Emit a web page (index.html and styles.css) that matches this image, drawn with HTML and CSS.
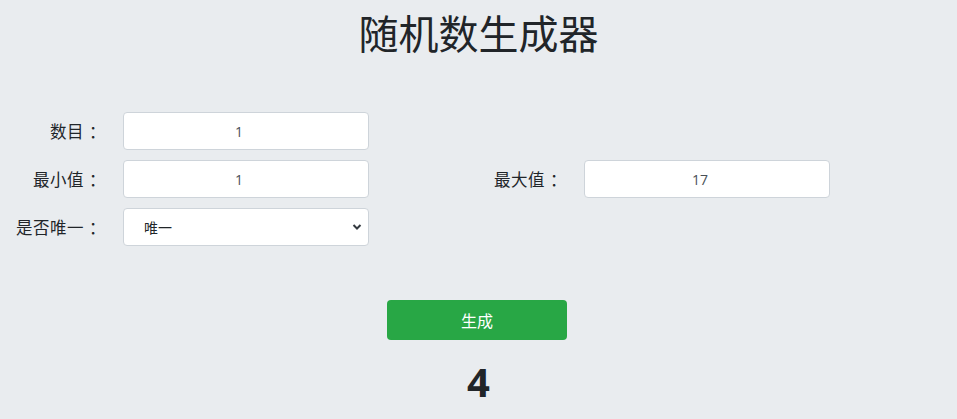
FILE: index.html
```html
<!DOCTYPE html>
<html lang="zh">
<head>
<meta charset="utf-8">
<title>随机数生成器</title>
<link rel="stylesheet" href="styles.css">
</head>
<body>
<h1 class="title">随机数生成器</h1>
<form class="form">
  <label class="label" for="count">数目<span class="colon">：</span></label>
  <input class="field" id="count" type="text" value="1">
  <span class="spacer"></span>
  <span class="spacer"></span>

  <label class="label" for="min">最小值<span class="colon">：</span></label>
  <input class="field" id="min" type="text" value="1">
  <label class="label" for="max">最大值<span class="colon">：</span></label>
  <input class="field" id="max" type="text" value="17">

  <label class="label" for="uniq">是否唯一<span class="colon">：</span></label>
  <div class="select">
    <span class="select-text">唯一</span>
    <svg class="chevron" width="10" height="8" viewBox="0 0 10 8"><path d="M1.5 2 L5 5.5 L8.5 2" fill="none" stroke="#343a40" stroke-width="2"/></svg>
  </div>
</form>
<div class="actions">
  <button class="btn" type="button">生成</button>
</div>
<div class="result">4</div>
</body>
</html>
```
FILE: styles.css
```css
html, body {
  margin: 0;
  padding: 0;
  background: #e9ecef;
  font-family: "Noto Sans CJK SC", "Open Sans", sans-serif;
  color: #212529;
}
.title {
  margin: 0;
  padding-top: 6px;
  text-align: center;
  font-size: 40px;
  font-weight: 400;
  line-height: 52px;
  height: 102px;
}
.form {
  display: grid;
  grid-template-columns: 106px 246px 181px 246px;
  column-gap: 17px;
  row-gap: 10px;
  grid-auto-rows: 38px;
  margin-top: 4px;
}
.label {
  font-size: 16.5px;
  text-align: right;
  align-self: center;
  line-height: 20px;
  letter-spacing: 0.5px;
}
.colon {
  padding-left: 5px;
}
.field {
  box-sizing: border-box;
  width: 246px;
  height: 38px;
  margin: 0;
  padding: 0 26px 0 12px;
  border: 1px solid #ced4da;
  border-radius: 4px;
  background: #fff;
  text-align: center;
  font-family: "Open Sans", "Noto Sans CJK SC", sans-serif;
  font-size: 14px;
  color: #495057;
  outline: none;
}
.select {
  box-sizing: border-box;
  width: 246px;
  height: 38px;
  border: 1px solid #ced4da;
  border-radius: 4px;
  background: #fff;
  display: flex;
  align-items: center;
  justify-content: space-between;
  padding: 0 4px 0 20px;
  font-size: 14px;
  color: #212529;
}
.chevron { margin-right: 2px; }
.actions {
  display: flex;
  justify-content: center;
  margin-top: 54px;
}
.btn {
  width: 180px;
  height: 40px;
  border: 0;
  border-radius: 4px;
  background: #28a745;
  color: #fff;
  font-family: "Noto Sans CJK SC", sans-serif;
  font-size: 16px;
  margin-left: -3px;
}
.result {
  text-align: center;
  font-family: "Open Sans", sans-serif;
  font-weight: 700;
  font-size: 40px;
  line-height: 48px;
  margin-top: 18px;
}
```
